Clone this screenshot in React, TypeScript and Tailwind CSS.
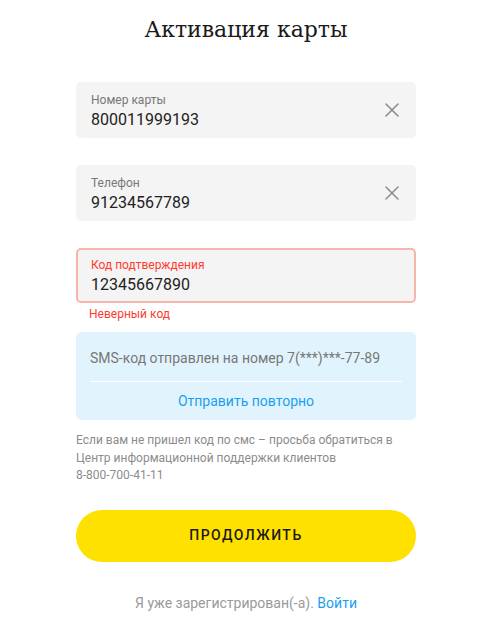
import { X } from "lucide-react";

function Field({ label, value }: { label: string; value: string }) {
  return (
    <div className="flex h-[56px] items-center rounded-[5px] bg-[#f4f4f4] pl-[15px] pr-[12px]">
      <div className="flex flex-1 flex-col pt-[2px]">
        <span className="text-[12px] leading-[16px] text-[#777]">{label}</span>
        <span className="text-[16px] leading-[23px] text-[#222]">{value}</span>
      </div>
      <X className="h-[24px] w-[24px] text-[#8a8a8a]" strokeWidth={1.5} />
    </div>
  );
}

export default function App() {
  return (
    <main className="min-h-screen bg-white font-['Roboto',sans-serif]">
      <div className="ml-[76px] flex w-[340px] flex-col pt-[14px]">
        <h1 className="text-center font-['DejaVu_Serif',serif] text-[22px] leading-[32px] text-[#1a1a1a]">
          Активация карты
        </h1>

        <div className="mt-[36px] flex flex-col gap-[27px]">
          <Field label="Номер карты" value="800011999193" />
          <Field label="Телефон" value="91234567789" />
        </div>

        <div className="mt-[27px] flex h-[55px] flex-col justify-center rounded-[5px] border-2 border-[#f7b4aa] bg-[#f4f4f4] pl-[13px] pt-[2px]">
          <span className="text-[12px] leading-[16px] text-[#ff3b30]">Код подтверждения</span>
          <span className="text-[16px] leading-[23px] text-[#222]">12345667890</span>
        </div>
        <p className="mt-[3px] pl-[13px] text-[12px] leading-[16px] text-[#ff3b30]">Неверный код</p>

        <div className="mt-[10px] flex flex-col rounded-[5px] bg-[#e1f4fd] px-[14px]">
          <p className="pt-[16px] pb-[13px] text-[14px] leading-[20px] text-[#777]">
            SMS-код отправлен на номер 7(***)***-77-89
          </p>
          <div className="h-px bg-white" />
          <a className="py-[9px] text-center text-[14px] leading-[20px] text-[#1a9ff0]">
            Отправить повторно
          </a>
        </div>

        <p className="mt-[12px] text-[12px] leading-[17.5px] text-[#8c8c8c]">
          Если вам не пришел код по смс – просьба обратиться в
          <br />
          Центр информационной поддержки клиентов
          <br />
          8-800-700-41-11
        </p>

        <button className="mt-[25px] h-[52px] rounded-full bg-[#ffe100] text-[14px] font-medium tracking-[1.5px] text-[#1a1a1a]">
          ПРОДОЛЖИТЬ
        </button>

        <p className="mt-[31px] text-center text-[14px] leading-[20px] text-[#9a9a9a]">
          Я уже зарегистрирован(-а). <a className="text-[#1a9ff0]">Войти</a>
        </p>
      </div>
    </main>
  );
}
